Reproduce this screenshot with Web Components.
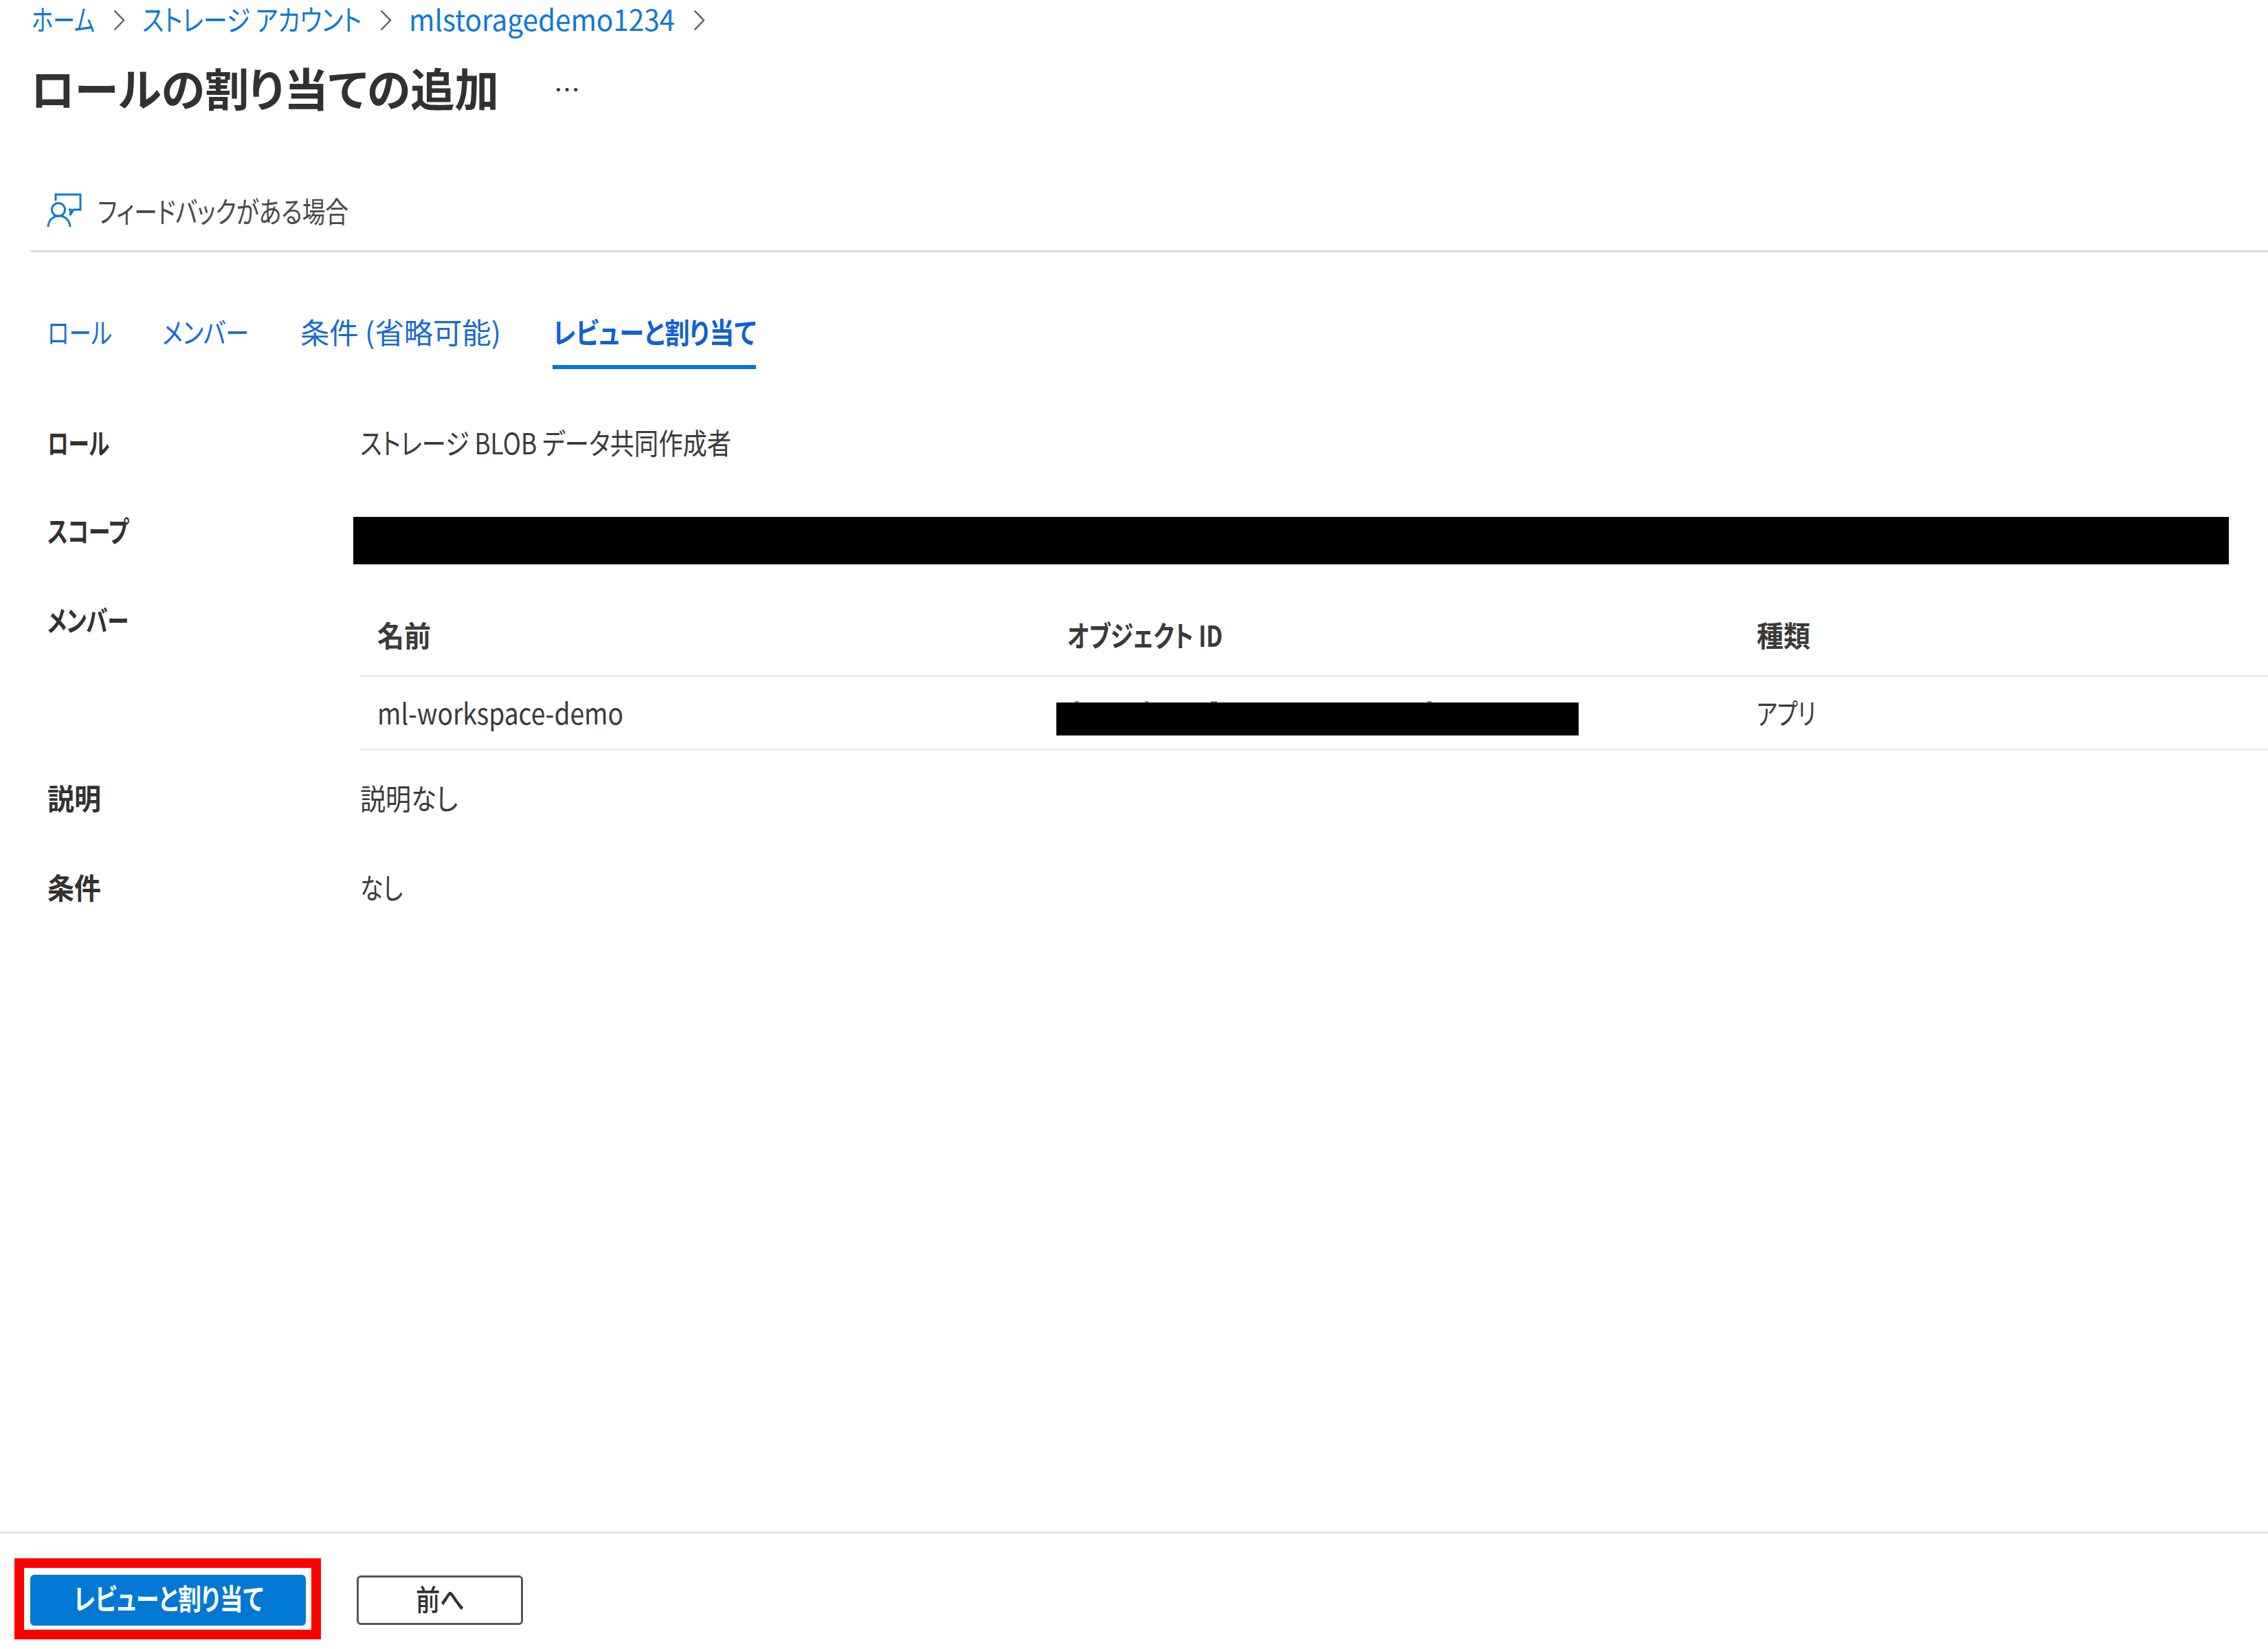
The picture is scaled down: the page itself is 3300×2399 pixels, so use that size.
<!DOCTYPE html>
<html lang="ja"><head><meta charset="utf-8"><title>ロールの割り当ての追加</title>
<style>
html,body{margin:0;padding:0;background:#fff}
body{width:3300px;height:2399px;overflow:hidden;display:flex;flex-direction:column;font-family:"Noto Sans CJK JP","Noto Sans",sans-serif;font-size:42px;color:#323130;font-feature-settings:"palt"}
</style></head><body>
<az-breadcrumb>
  <az-crumb><az-t w="92">ホーム</az-t></az-crumb>
  <az-crumb><az-t w="319">ストレージ アカウント</az-t></az-crumb>
  <az-crumb><az-t w="387">mlstoragedemo1234</az-t></az-crumb>
</az-breadcrumb>
<az-title><az-t w="682" dy="-4">ロールの割り当ての追加</az-t></az-title>
<az-feedback><az-t w="365">フィードバックがある場合</az-t></az-feedback>
<az-tabs>
  <az-tab style="margin:0 -2px 0 2px"><az-t w="94">ロール</az-t></az-tab>
  <az-tab><az-t w="126">メンバー</az-t></az-tab>
  <az-tab><az-t w="292">条件 (省略可能)</az-t></az-tab>
  <az-tab active><az-t w="296">レビューと割り当て</az-t></az-tab>
</az-tabs>
<az-row style="margin-top:76px"><az-t slot="label" w="90">ロール</az-t><az-t w="540">ストレージ BLOB データ共同作成者</az-t></az-row>
<az-row style="margin-top:64px"><az-t slot="label" w="118">スコープ</az-t><az-redact style="width:2729px;height:69px;margin:11px 0 0 -10px"></az-redact></az-row>
<az-row style="margin-top:50px"><az-t slot="label" w="118">メンバー</az-t><az-members></az-members></az-row>
<az-row style="margin-top:38px"><az-t slot="label" w="78">説明</az-t><az-t w="142">説明なし</az-t></az-row>
<az-row style="margin-top:66px"><az-t slot="label" w="78">条件</az-t><az-t w="62">なし</az-t></az-row>
<az-footer>
  <az-highlight><az-button primary><az-t w="276" dy="-5">レビューと割り当て</az-t></az-button></az-highlight>
  <az-button><az-t w="71" dy="-4">前へ</az-t></az-button>
</az-footer>
<script>
function def(name, html){
  customElements.define(name, class extends HTMLElement{
    connectedCallback(){
      if(this.shadowRoot) return;
      this.attachShadow({mode:'open'}).innerHTML = html;
    }
  });
}
def('az-crumb',`<style>:host{display:flex;align-items:center;color:#0f78d4;white-space:nowrap}
svg{margin:0 25px 0 27px;flex:none}</style>
<slot></slot>
<svg width="17" height="31" viewBox="0 0 17 31"><path d="M1.5 1.5 15 15.5 1.5 29.5" fill="none" stroke="#605e5c" stroke-width="2.4"/></svg>`);
def('az-breadcrumb',`<style>:host{display:flex;height:58px;padding-left:46px;align-items:center;line-height:58px;flex:none}</style><slot></slot>`);
def('az-title',`<style>:host{display:flex;align-items:center;height:144px;padding-left:44px;flex:none;font-size:66px;font-weight:700;color:#323130;white-space:nowrap}
.d{font-size:38px;font-weight:400;margin-left:80px;color:#323130;position:relative;top:-2px}</style><slot></slot><span class="d">…</span>`);
def('az-feedback',`<style>:host{display:flex;align-items:center;height:114px;margin:48px 0 0 45px;padding-left:23px;border-bottom:3px solid #d8d8d8;gap:22px;flex:none;white-space:nowrap;color:#4a4846}
svg{flex:none}</style>
<svg width="52" height="52" viewBox="28 22 52 52" fill="none" stroke="#0f78d4" stroke-width="3"><path d="M41 33V24H77V46H67L62 54 63 46H60"/><circle cx="45" cy="46" r="9.5"/><path d="M30 71A16 16 0 0 1 62 71"/></svg>
<slot></slot>`);
def('az-tabs',`<style>:host{display:flex;gap:75px;padding:70px 0 0 67px;flex:none}</style><slot></slot>`);
def('az-tab',`<style>:host{display:block;box-sizing:border-box;height:100px;line-height:94px;white-space:nowrap;color:#1a6ad2;border-bottom:6px solid transparent}
:host([active]){font-weight:700;color:#0f62d0;border-bottom-color:#0078d4}</style><slot></slot>`);
def('az-row',`<style>:host{display:grid;grid-template-columns:455px 1fr;padding-left:69px;line-height:64px;flex:none}
.l{font-weight:700;white-space:nowrap}.v{min-width:0;white-space:nowrap;color:#3b3a39}</style>
<div class="l"><slot name="label"></slot></div><div class="v"><slot></slot></div>`);
def('az-redact',`<style>:host{display:block;background:#000}</style>`);
def('az-members',`<style>:host{display:block;width:2776px}
.r{display:grid;grid-template-columns:1004px 1003px 1fr;padding-left:25px;line-height:64px}
.h{height:89px;padding-top:22px;font-weight:700;border-bottom:3px solid #edebe9}
.b{height:102px;padding-top:2px;border-bottom:3px solid #f0efee;align-items:center}
.red{display:block;align-self:start;width:760px;height:50px;margin:33px 0 0 -16px;
background:linear-gradient(#000,#000) 0 2px/100% 48px no-repeat,
linear-gradient(#8b8b8b,#8b8b8b) 27px 0/6px 2px no-repeat,
linear-gradient(#8b8b8b,#8b8b8b) 129px 0/5px 2px no-repeat,
linear-gradient(#8b8b8b,#8b8b8b) 225px 0/9px 2px no-repeat,
linear-gradient(#8b8b8b,#8b8b8b) 540px 0/6px 2px no-repeat}
</style>
<div class="r h"><div><az-t w="78">名前</az-t></div><div><az-t w="226">オブジェクト ID</az-t></div><div><az-t w="78">種類</az-t></div></div>
<div class="r b"><div><az-t w="358">ml-workspace-demo</az-t></div><span class="red"></span><div><az-t w="86">アプリ</az-t></div></div>`);
def('az-footer',`<style>:host{display:flex;box-sizing:border-box;margin-top:auto;height:171px;border-top:3px solid #e6e4e6;padding:36px 0 0 21px;gap:52px;align-items:flex-start;flex:none}
::slotted(az-button:not([primary])){margin-top:25px}</style><slot></slot>`);
def('az-highlight',`<style>:host{display:block;border:14px solid #f00;padding:10px 8px 6px 9px}</style><slot></slot>`);
def('az-button',`<style>:host{display:flex;align-items:center;justify-content:center;box-sizing:border-box;width:242px;height:72px;border:3px solid #555;border-radius:6px;font-weight:500;color:#323130;background:#fff;white-space:nowrap}
:host([primary]){width:401px;height:74px;border:none;background:#0078d4;color:#fff;font-weight:700}</style><slot></slot>`);
/* az-t: a run of text condensed horizontally to a given width, like the narrow UI face of the original. Defined last so inherited font settings are in place when it measures. */
customElements.define('az-t', class extends HTMLElement{
  connectedCallback(){
    if(this.shadowRoot) return;
    const w=+this.getAttribute('w'), dy=this.getAttribute('dy')||'-2';
    const s=this.attachShadow({mode:'open'});
    s.innerHTML=`<style>:host{display:inline-block;width:${w}px;white-space:nowrap;vertical-align:top}
span{display:inline-block;transform-origin:0 50%}</style><span><slot></slot></span>`;
    const i=s.querySelector('span');
    const n=i.getBoundingClientRect().width||w;
    i.style.transform=`translateY(${dy}px) scaleX(${w/n})`;
  }
});
</script>
</body></html>
